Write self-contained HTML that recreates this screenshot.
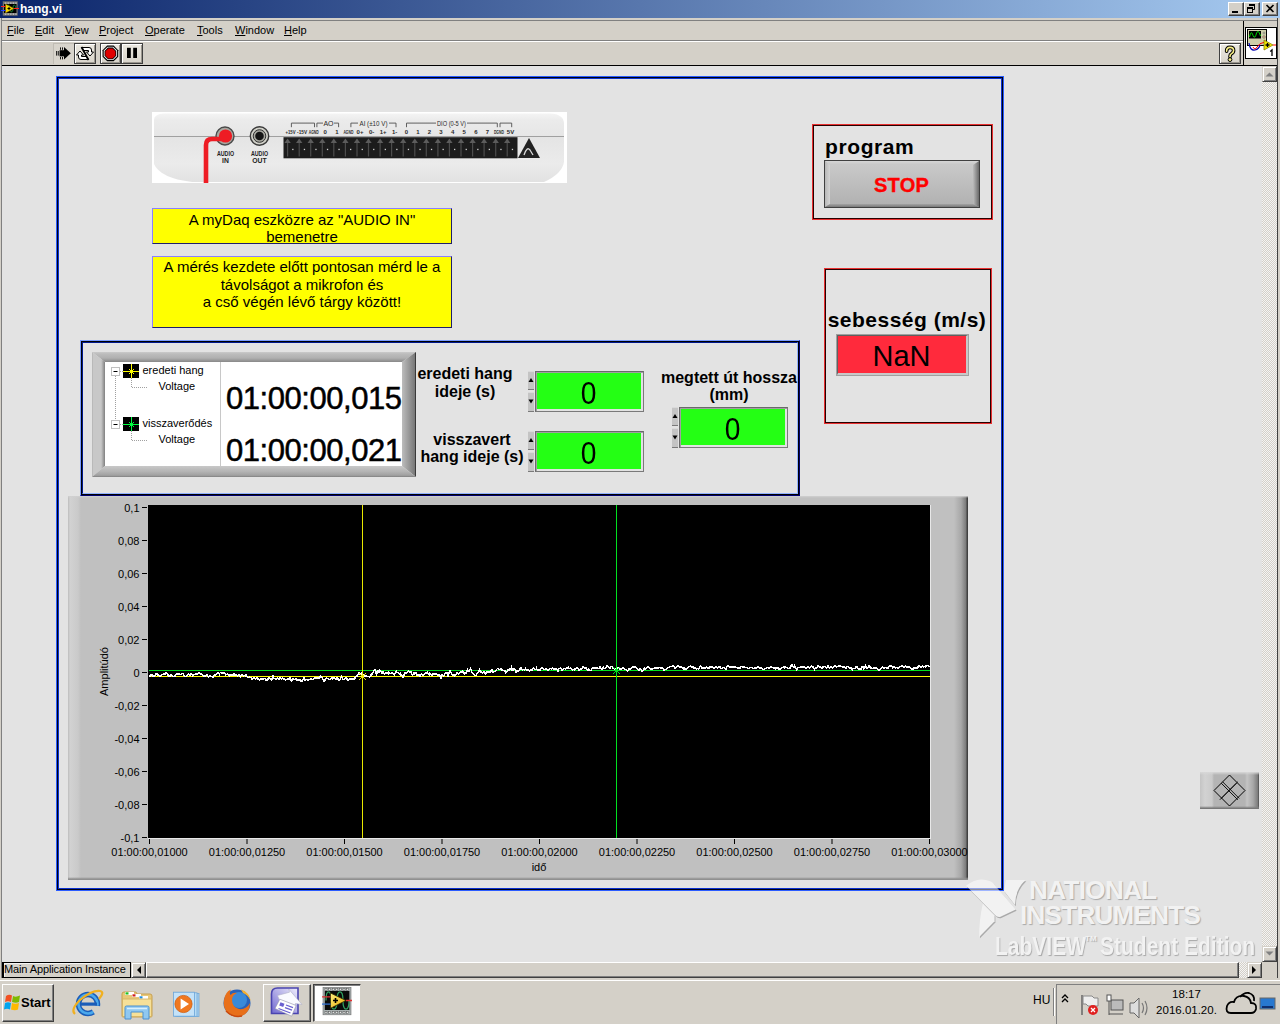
<!DOCTYPE html>
<html><head><meta charset="utf-8"><style>
html,body{margin:0;padding:0;}
body{width:1280px;height:1024px;overflow:hidden;position:relative;background:#e3e3e3;font-family:"Liberation Sans",sans-serif;}
.t{position:absolute;white-space:pre;}
.b{position:absolute;box-sizing:border-box;}
svg{position:absolute;}
</style></head><body>
<div class="b" style="left:0px;top:0px;width:1280px;height:18px;background:linear-gradient(to right,#0a246a,#a6caf0);"></div>
<svg style="left:1px;top:1px" width="18" height="15" viewBox="0 0 18 15">
<rect x="2" y="0.5" width="14.5" height="14" fill="#808080" stroke="#606060" stroke-width="0.6"/>
<rect x="3" y="3" width="12.5" height="9" fill="#000"/>
<rect x="4.0" y="1.6" width="1.2" height="1" fill="#ddd"/><rect x="4.0" y="12.6" width="1.2" height="1" fill="#ddd"/><rect x="6.6" y="1.6" width="1.2" height="1" fill="#ddd"/><rect x="6.6" y="12.6" width="1.2" height="1" fill="#ddd"/><rect x="9.2" y="1.6" width="1.2" height="1" fill="#ddd"/><rect x="9.2" y="12.6" width="1.2" height="1" fill="#ddd"/><rect x="11.8" y="1.6" width="1.2" height="1" fill="#ddd"/><rect x="11.8" y="12.6" width="1.2" height="1" fill="#ddd"/><rect x="14.4" y="1.6" width="1.2" height="1" fill="#ddd"/><rect x="14.4" y="12.6" width="1.2" height="1" fill="#ddd"/>
<path d="M6 8 C6 3, 9 3, 9 7.5 S 12 12, 12 7.5 S 14 3, 15 7" stroke="#20a040" stroke-width="0.8" fill="none"/>
<path d="M4.5 3 L13 7.5 L4.5 12 Z" fill="#f5d800" stroke="#806000" stroke-width="0.5"/>
<path d="M6.5 7.5h3M8 6v3" stroke="#000" stroke-width="1"/>
<path d="M0 5.5h4.5M13 7.5h5" stroke="#ff2020" stroke-width="1"/>
<path d="M0 9.5h4.5" stroke="#2040ff" stroke-width="1"/>
</svg>
<div class="t" style="left:20px;top:2.84px;font-size:12px;line-height:12px;color:#fff;font-weight:bold;">hang.vi</div>
<div class="b" style="left:1228px;top:2px;width:16px;height:14px;background:#d4d0c8;border-top:1px solid #fff;border-left:1px solid #fff;border-right:1px solid #404040;border-bottom:1px solid #404040;box-shadow:inset -1px -1px 0 #808080;"></div>
<div class="b" style="left:1244px;top:2px;width:16px;height:14px;background:#d4d0c8;border-top:1px solid #fff;border-left:1px solid #fff;border-right:1px solid #404040;border-bottom:1px solid #404040;box-shadow:inset -1px -1px 0 #808080;"></div>
<div class="b" style="left:1262px;top:2px;width:16px;height:14px;background:#d4d0c8;border-top:1px solid #fff;border-left:1px solid #fff;border-right:1px solid #404040;border-bottom:1px solid #404040;box-shadow:inset -1px -1px 0 #808080;"></div>
<svg style="left:1228px;top:2px" width="50" height="14" viewBox="0 0 50 14">
<rect x="4" y="9" width="6" height="2" fill="#000"/>
<path d="M21.5 2.5 H26.5 V7.5 H25" fill="none" stroke="#000" stroke-width="1"/><rect x="21" y="2" width="6" height="2" fill="#000"/>
<rect x="19.5" y="5.5" width="5" height="5" fill="#d4d0c8" stroke="#000" stroke-width="1"/><rect x="19" y="5" width="6" height="2" fill="#000"/>
<path d="M38.5 3 L45.5 10 M45.5 3 L38.5 10" stroke="#000" stroke-width="1.6"/>
</svg>
<div class="b" style="left:0px;top:18px;width:1280px;height:3px;background:#d4d0c8;border-bottom:1px solid #808080;"></div>
<div class="b" style="left:0px;top:18px;width:2px;height:961px;background:#d4d0c8;border-left:1px solid #d4d0c8;box-shadow:inset -1px 0 0 #808080;"></div>
<div class="b" style="left:1277px;top:18px;width:3px;height:961px;background:#d4d0c8;box-shadow:inset 1px 0 0 #404040;"></div>
<div class="b" style="left:2px;top:21px;width:1275px;height:19px;background:#d4d0c8;"></div>
<div class="t" style="left:7px;top:24.69px;font-size:11px;line-height:11px;color:#000;"><u style="text-decoration-thickness:1px;text-underline-offset:1px">F</u>ile</div>
<div class="t" style="left:35px;top:24.69px;font-size:11px;line-height:11px;color:#000;"><u style="text-decoration-thickness:1px;text-underline-offset:1px">E</u>dit</div>
<div class="t" style="left:65px;top:24.69px;font-size:11px;line-height:11px;color:#000;"><u style="text-decoration-thickness:1px;text-underline-offset:1px">V</u>iew</div>
<div class="t" style="left:99px;top:24.69px;font-size:11px;line-height:11px;color:#000;"><u style="text-decoration-thickness:1px;text-underline-offset:1px">P</u>roject</div>
<div class="t" style="left:145px;top:24.69px;font-size:11px;line-height:11px;color:#000;"><u style="text-decoration-thickness:1px;text-underline-offset:1px">O</u>perate</div>
<div class="t" style="left:197px;top:24.69px;font-size:11px;line-height:11px;color:#000;"><u style="text-decoration-thickness:1px;text-underline-offset:1px">T</u>ools</div>
<div class="t" style="left:235px;top:24.69px;font-size:11px;line-height:11px;color:#000;"><u style="text-decoration-thickness:1px;text-underline-offset:1px">W</u>indow</div>
<div class="t" style="left:284px;top:24.69px;font-size:11px;line-height:11px;color:#000;"><u style="text-decoration-thickness:1px;text-underline-offset:1px">H</u>elp</div>
<div class="b" style="left:2px;top:40px;width:1241px;height:2px;background:#808080;border-bottom:1px solid #fff;"></div>
<div class="b" style="left:2px;top:42px;width:1241px;height:23px;background:#d4d0c8;"></div>
<div class="b" style="left:2px;top:65px;width:1275px;height:1px;background:#000;"></div>
<div class="b" style="left:1243px;top:21px;width:1px;height:45px;background:#000;"></div>
<div class="b" style="left:1244px;top:21px;width:33px;height:44px;background:#d4d0c8;"></div>
<div class="b" style="left:53px;top:43px;width:21px;height:21px;background:#d8d4cc;box-shadow:inset 1px 1px 0 #c0bcb4;"></div>
<div class="b" style="left:74px;top:43px;width:22px;height:21px;background:linear-gradient(#ece9e1,#d8d4cb);border:1px solid #404040;box-shadow:inset 1px 1px 0 #fff,inset -1px -1px 0 #9a968e;"></div>
<div class="b" style="left:100px;top:43px;width:21px;height:21px;background:linear-gradient(#ece9e1,#d8d4cb);border:1px solid #404040;box-shadow:inset 1px 1px 0 #fff,inset -1px -1px 0 #9a968e;"></div>
<div class="b" style="left:121px;top:43px;width:22px;height:21px;background:linear-gradient(#ece9e1,#d8d4cb);border:1px solid #404040;box-shadow:inset 1px 1px 0 #fff,inset -1px -1px 0 #9a968e;"></div>
<svg style="left:53px;top:43px" width="90" height="21" viewBox="0 0 90 21">
<path d="M11 4L17.8 10.3L11 16.6Z" fill="#000"/>
<rect x="6.6" y="7.2" width="4.6" height="6.2" fill="#000"/>
<rect x="3.2" y="8" width="0.9" height="4.6" fill="#000"/><rect x="4.8" y="8" width="0.9" height="4.6" fill="#000"/>
<rect x="7" y="4.4" width="0.9" height="2.4" fill="#000"/><rect x="9" y="4.4" width="0.9" height="2.4" fill="#000"/>
<rect x="7" y="14" width="0.9" height="2.4" fill="#000"/><rect x="9" y="14" width="0.9" height="2.4" fill="#000"/>
<g transform="translate(21,0)">
<path d="M7.5 4.5H15Q17.5 4.5 17.5 7V9H19.5L16 13L12.5 9H14.5V7.5H9.5Z" fill="#fff" stroke="#000" stroke-width="1"/>
<path d="M14.5 16.5H7Q4.5 16.5 4.5 14V12H2.5L6 8L9.5 12H7.5V13.5H12.5Z" fill="#fff" stroke="#000" stroke-width="1"/>
<path d="M7.5 4L14.5 17" stroke="#000" stroke-width="1.8"/>
</g>
<g transform="translate(47,0)">
<path d="M7.17 2.60 L13.63 2.60 L18.20 7.17 L18.20 13.63 L13.63 18.20 L7.17 18.20 L2.60 13.63 L2.60 7.17Z" fill="#000"/>
<path d="M7.62 3.70 L13.18 3.70 L17.10 7.62 L17.10 13.18 L13.18 17.10 L7.62 17.10 L3.70 13.18 L3.70 7.62Z" fill="#f4f4f4"/>
<path d="M8.00 4.60 L12.80 4.60 L16.20 8.00 L16.20 12.80 L12.80 16.20 L8.00 16.20 L4.60 12.80 L4.60 8.00Z" fill="#000"/>
<path d="M8.33 5.40 L12.47 5.40 L15.40 8.33 L15.40 12.47 L12.47 15.40 L8.33 15.40 L5.40 12.47 L5.40 8.33Z" fill="#e00000"/>
</g>
<g transform="translate(68,0)">
<rect x="6" y="4.8" width="3.8" height="10.2" fill="#000"/><rect x="12.2" y="4.8" width="3.8" height="10.2" fill="#000"/>
</g>
</svg>
<div class="b" style="left:1219px;top:43px;width:22px;height:21px;background:linear-gradient(#ece9e1,#d8d4cb);border:1px solid #404040;box-shadow:inset 1px 1px 0 #fff,inset -1px -1px 0 #9a968e;"></div>
<svg style="left:1219px;top:43px" width="22" height="21" viewBox="0 0 22 21">
<path d="M7.6 8.2 Q7.6 4.4 11 4.4 Q14.6 4.4 14.6 7.6 Q14.6 9.6 12.6 10.6 Q11 11.4 11 13.2 V13.8" fill="none" stroke="#000" stroke-width="3.6" stroke-linecap="round"/>
<path d="M7.6 8.2 Q7.6 4.4 11 4.4 Q14.6 4.4 14.6 7.6 Q14.6 9.6 12.6 10.6 Q11 11.4 11 13.2 V13.8" fill="none" stroke="#f8f088" stroke-width="1.6" stroke-linecap="round"/>
<circle cx="11" cy="16.6" r="1.9" fill="#f8f088" stroke="#000" stroke-width="1"/>
</svg>
<div class="b" style="left:1245px;top:27px;width:32px;height:32px;background:#fff;border:1px solid #000;"></div>
<svg style="left:1245px;top:27px" width="32" height="32" viewBox="0 0 32 32">
<rect x="2.5" y="2.5" width="19" height="16" fill="#cfcfaa" stroke="#000" stroke-width="1"/>
<rect x="4" y="4" width="12" height="7.5" fill="#000"/>
<path d="M4.5 10 Q6.2 2 8 8.5 Q9.8 13 11.6 6 Q13.2 1.5 15.5 9" stroke="#00d000" stroke-width="1" fill="none"/>
<circle cx="19" cy="6" r="1" fill="none" stroke="#777" stroke-width="0.7"/><circle cx="19" cy="10" r="1.3" fill="#e8b080" stroke="#777" stroke-width="0.7"/>
<path d="M4 16 Q5 24 10 23 Q14 22 15 18" stroke="#0000b0" stroke-width="1.2" fill="none"/>
<path d="M8 20 Q10 24 12 20 Q14 16 20 15 H21" stroke="#ff0000" stroke-width="1" fill="none"/>
<path d="M19 13 L28 18 L19 23 Z" fill="#f0e800" stroke="#8a8000" stroke-width="0.8"/>
<path d="M20.5 18 H24.5 M22.5 16 V20" stroke="#000" stroke-width="1.3"/>
<path d="M28 18 H31" stroke="#ff0000" stroke-width="1"/>
<path d="M25.2 24.5 L27 23 V29" stroke="#000" stroke-width="1.3" fill="none"/>
</svg>
<div class="b" style="left:2px;top:66px;width:1260px;height:896px;background:#e3e3e3;"></div>
<div class="b" style="left:1262px;top:66px;width:15px;height:896px;background-color:#f4f4f4;background-image:linear-gradient(45deg,#d4d0c8 25%,transparent 25%,transparent 75%,#d4d0c8 75%),linear-gradient(45deg,#d4d0c8 25%,transparent 25%,transparent 75%,#d4d0c8 75%);background-size:2px 2px;background-position:0 0,1px 1px;"></div>
<div class="b" style="left:1262px;top:66px;width:15px;height:16px;background:#d4d0c8;border-top:1px solid #d4d0c8;border-left:1px solid #d4d0c8;border-right:1px solid #404040;border-bottom:1px solid #404040;box-shadow:inset 1px 1px 0 #fff,inset -1px -1px 0 #808080;"></div>
<div class="b" style="left:1262px;top:946px;width:15px;height:16px;background:#d4d0c8;border-top:1px solid #d4d0c8;border-left:1px solid #d4d0c8;border-right:1px solid #404040;border-bottom:1px solid #404040;box-shadow:inset 1px 1px 0 #fff,inset -1px -1px 0 #808080;"></div>
<svg style="left:1262px;top:66px" width="15" height="896" viewBox="0 0 15 896">
<path d="M3.5 10.5h8l-4-4z" fill="#808080"/>
<path d="M3.5 885.5h8l-4 4z" fill="#808080"/>
</svg>
<div class="b" style="left:2px;top:962px;width:1260px;height:16px;background:#d4d0c8;border-top:1px solid #fff;"></div>
<div class="b" style="left:2px;top:962px;width:129px;height:16px;background:#d4d0c8;border:1px solid #000;border-left-width:2px;box-shadow:inset 1px 1px 0 #f4f4f4;"></div>
<div class="t" style="left:4px;top:963.69px;font-size:11px;line-height:11px;color:#000;letter-spacing:-0.12px;">Main Application Instance</div>
<div class="b" style="left:131px;top:962px;width:15px;height:16px;background:#d4d0c8;border-top:1px solid #d4d0c8;border-left:1px solid #d4d0c8;border-right:1px solid #404040;border-bottom:1px solid #404040;box-shadow:inset 1px 1px 0 #fff,inset -1px -1px 0 #808080;"></div>
<div class="b" style="left:146px;top:962px;width:1101px;height:16px;background-color:#f4f4f4;background-image:linear-gradient(45deg,#d4d0c8 25%,transparent 25%,transparent 75%,#d4d0c8 75%),linear-gradient(45deg,#d4d0c8 25%,transparent 25%,transparent 75%,#d4d0c8 75%);background-size:2px 2px;background-position:0 0,1px 1px;"></div>
<div class="b" style="left:146px;top:962px;width:1093px;height:16px;background:#d4d0c8;border-top:1px solid #fff;border-left:1px solid #fff;border-right:1px solid #404040;border-bottom:1px solid #404040;box-shadow:inset -1px -1px 0 #808080;"></div>
<div class="b" style="left:1247px;top:962px;width:15px;height:16px;background:#d4d0c8;border-top:1px solid #d4d0c8;border-left:1px solid #d4d0c8;border-right:1px solid #404040;border-bottom:1px solid #404040;box-shadow:inset 1px 1px 0 #fff,inset -1px -1px 0 #808080;"></div>
<div class="b" style="left:1262px;top:962px;width:15px;height:16px;background:#d4d0c8;"></div>
<svg style="left:131px;top:962px" width="1131" height="16" viewBox="0 0 1131 16">
<path d="M10 4v8l-4-4z" fill="#000"/>
<path d="M1121 4v8l4-4z" fill="#000"/>
</svg>
<div class="b" style="left:0px;top:978px;width:1280px;height:2px;background:#d4d0c8;"></div>
<div class="b" style="left:56px;top:76px;width:948px;height:815px;border:1px solid #2a5cff;box-shadow:inset 0 0 0 1px #000010,inset 0 0 0 2px #0a30d0;"></div>
<svg style="left:152px;top:112px" width="415" height="71" viewBox="0 0 415 71">
<defs>
<linearGradient id="dtop" x1="0" y1="0" x2="0" y2="1"><stop offset="0" stop-color="#f4f4f4"/><stop offset="0.3" stop-color="#ebebeb"/><stop offset="1" stop-color="#e6e6e6"/></linearGradient>
<linearGradient id="dbot" x1="0" y1="0" x2="0" y2="1"><stop offset="0" stop-color="#e4e4e4"/><stop offset="0.6" stop-color="#ebebeb"/><stop offset="1" stop-color="#e2e2e2"/></linearGradient>
</defs>
<rect width="415" height="71" fill="#fff"/>
<path d="M2 24 V8 Q2 2 12 1.5 H398 Q412 2 412 12 V24 Z" fill="url(#dtop)"/>
<path d="M2 24 H412 V50 Q410 62 392 70 H40 Q8 66 2 52 Z" fill="url(#dbot)"/>
<path d="M2 24.5 H412" stroke="#a0a0a0" stroke-width="1"/>
<circle cx="73" cy="24" r="9" fill="#a8a8a0" stroke="#4a4a4a" stroke-width="1.4"/>
<circle cx="73.5" cy="24" r="6.6" fill="#ee1c24"/>
<path d="M54 71 V33 Q54 27 60 27 H70" stroke="#ee1c24" stroke-width="4.6" fill="none"/>
<circle cx="107.5" cy="24" r="9.2" fill="#d0d0c8" stroke="#3a3a3a" stroke-width="1.4"/>
<circle cx="107.5" cy="24" r="6.3" fill="#a8a8a0" stroke="#333" stroke-width="1"/>
<circle cx="107.5" cy="24" r="4.3" fill="#151515"/>
<g font-family="Liberation Sans" font-weight="bold" font-size="6.8" fill="#222" text-anchor="middle">
<text x="73.5" y="43.5" textLength="17" lengthAdjust="spacingAndGlyphs">AUDIO</text><text x="73.5" y="50.5">IN</text>
<text x="107.5" y="43.5" textLength="17" lengthAdjust="spacingAndGlyphs">AUDIO</text><text x="107.5" y="50.5">OUT</text>
</g>
<rect x="131.5" y="25.2" width="234" height="21.1" fill="#1c1c1c"/>
<path d="M132.4 31 L135.6 26.6 L138.8 31 Z" fill="#5c5c5c"/><rect x="135.0" y="31" width="1.2" height="13.5" fill="#4c4c4c"/><rect x="140.2" y="36.8" width="1.3" height="1.3" fill="#d0d0d0"/><path d="M144.0 31 L147.2 26.6 L150.4 31 Z" fill="#5c5c5c"/><rect x="146.6" y="31" width="1.2" height="13.5" fill="#4c4c4c"/><rect x="151.8" y="36.8" width="1.3" height="1.3" fill="#d0d0d0"/><path d="M155.5 31 L158.7 26.6 L161.9 31 Z" fill="#5c5c5c"/><rect x="158.1" y="31" width="1.2" height="13.5" fill="#4c4c4c"/><rect x="163.3" y="36.8" width="1.3" height="1.3" fill="#d0d0d0"/><path d="M167.1 31 L170.3 26.6 L173.5 31 Z" fill="#5c5c5c"/><rect x="169.7" y="31" width="1.2" height="13.5" fill="#4c4c4c"/><rect x="174.9" y="36.8" width="1.3" height="1.3" fill="#d0d0d0"/><path d="M178.6 31 L181.8 26.6 L185.0 31 Z" fill="#5c5c5c"/><rect x="181.2" y="31" width="1.2" height="13.5" fill="#4c4c4c"/><rect x="186.4" y="36.8" width="1.3" height="1.3" fill="#d0d0d0"/><path d="M190.2 31 L193.4 26.6 L196.6 31 Z" fill="#5c5c5c"/><rect x="192.8" y="31" width="1.2" height="13.5" fill="#4c4c4c"/><rect x="198.0" y="36.8" width="1.3" height="1.3" fill="#d0d0d0"/><path d="M201.8 31 L205.0 26.6 L208.2 31 Z" fill="#5c5c5c"/><rect x="204.4" y="31" width="1.2" height="13.5" fill="#4c4c4c"/><rect x="209.6" y="36.8" width="1.3" height="1.3" fill="#d0d0d0"/><path d="M213.3 31 L216.5 26.6 L219.7 31 Z" fill="#5c5c5c"/><rect x="215.9" y="31" width="1.2" height="13.5" fill="#4c4c4c"/><rect x="221.1" y="36.8" width="1.3" height="1.3" fill="#d0d0d0"/><path d="M224.9 31 L228.1 26.6 L231.3 31 Z" fill="#5c5c5c"/><rect x="227.5" y="31" width="1.2" height="13.5" fill="#4c4c4c"/><rect x="232.7" y="36.8" width="1.3" height="1.3" fill="#d0d0d0"/><path d="M236.4 31 L239.6 26.6 L242.8 31 Z" fill="#5c5c5c"/><rect x="239.0" y="31" width="1.2" height="13.5" fill="#4c4c4c"/><rect x="244.2" y="36.8" width="1.3" height="1.3" fill="#d0d0d0"/><path d="M248.0 31 L251.2 26.6 L254.4 31 Z" fill="#5c5c5c"/><rect x="250.6" y="31" width="1.2" height="13.5" fill="#4c4c4c"/><rect x="255.8" y="36.8" width="1.3" height="1.3" fill="#d0d0d0"/><path d="M259.6 31 L262.8 26.6 L266.0 31 Z" fill="#5c5c5c"/><rect x="262.2" y="31" width="1.2" height="13.5" fill="#4c4c4c"/><rect x="267.4" y="36.8" width="1.3" height="1.3" fill="#d0d0d0"/><path d="M271.1 31 L274.3 26.6 L277.5 31 Z" fill="#5c5c5c"/><rect x="273.7" y="31" width="1.2" height="13.5" fill="#4c4c4c"/><rect x="278.9" y="36.8" width="1.3" height="1.3" fill="#d0d0d0"/><path d="M282.7 31 L285.9 26.6 L289.1 31 Z" fill="#5c5c5c"/><rect x="285.3" y="31" width="1.2" height="13.5" fill="#4c4c4c"/><rect x="290.5" y="36.8" width="1.3" height="1.3" fill="#d0d0d0"/><path d="M294.2 31 L297.4 26.6 L300.6 31 Z" fill="#5c5c5c"/><rect x="296.8" y="31" width="1.2" height="13.5" fill="#4c4c4c"/><rect x="302.0" y="36.8" width="1.3" height="1.3" fill="#d0d0d0"/><path d="M305.8 31 L309.0 26.6 L312.2 31 Z" fill="#5c5c5c"/><rect x="308.4" y="31" width="1.2" height="13.5" fill="#4c4c4c"/><rect x="313.6" y="36.8" width="1.3" height="1.3" fill="#d0d0d0"/><path d="M317.4 31 L320.6 26.6 L323.8 31 Z" fill="#5c5c5c"/><rect x="320.0" y="31" width="1.2" height="13.5" fill="#4c4c4c"/><rect x="325.2" y="36.8" width="1.3" height="1.3" fill="#d0d0d0"/><path d="M328.9 31 L332.1 26.6 L335.3 31 Z" fill="#5c5c5c"/><rect x="331.5" y="31" width="1.2" height="13.5" fill="#4c4c4c"/><rect x="336.7" y="36.8" width="1.3" height="1.3" fill="#d0d0d0"/><path d="M340.5 31 L343.7 26.6 L346.9 31 Z" fill="#5c5c5c"/><rect x="343.1" y="31" width="1.2" height="13.5" fill="#4c4c4c"/><rect x="348.3" y="36.8" width="1.3" height="1.3" fill="#d0d0d0"/><path d="M352.0 31 L355.2 26.6 L358.4 31 Z" fill="#5c5c5c"/><rect x="354.6" y="31" width="1.2" height="13.5" fill="#4c4c4c"/><rect x="359.8" y="36.8" width="1.3" height="1.3" fill="#d0d0d0"/>
<g font-family="Liberation Sans" font-weight="bold" font-size="6" fill="#2a2a2a" text-anchor="middle"><text x="138.5" y="22.3" textLength="10" lengthAdjust="spacingAndGlyphs">+15V</text><text x="150.1" y="22.3" textLength="10" lengthAdjust="spacingAndGlyphs">-15V</text><text x="161.7" y="22.3" textLength="10" lengthAdjust="spacingAndGlyphs">AGND</text><text x="173.2" y="22.3">0</text><text x="184.8" y="22.3">1</text><text x="196.4" y="22.3" textLength="10" lengthAdjust="spacingAndGlyphs">AGND</text><text x="208.0" y="22.3">0+</text><text x="219.6" y="22.3">0-</text><text x="231.1" y="22.3">1+</text><text x="242.7" y="22.3">1-</text><text x="254.3" y="22.3">0</text><text x="265.9" y="22.3">1</text><text x="277.5" y="22.3">2</text><text x="289.0" y="22.3">3</text><text x="300.6" y="22.3">4</text><text x="312.2" y="22.3">5</text><text x="323.8" y="22.3">6</text><text x="335.4" y="22.3">7</text><text x="346.9" y="22.3" textLength="10" lengthAdjust="spacingAndGlyphs">DGND</text><text x="358.5" y="22.3">5V</text></g>
<path d="M139.4 15.2 V11.1 H162.5 V15.2 M164.9 15.2 V11.1 H186.6 V15.2 M198.9 15.2 V11.1 H244 V15.2 M254.5 15.2 V11.1 H345.3 V15.2 M348 15.2 V11.1 H359.7 V15.2" stroke="#505050" stroke-width="0.9" fill="none"/>
<rect x="171" y="8" width="11" height="6" fill="#e9e9e9"/><rect x="206" y="8" width="31" height="6" fill="#e9e9e9"/><rect x="284" y="8" width="31" height="6" fill="#e9e9e9"/>
<g font-family="Liberation Sans" font-size="7" fill="#2a2a2a" text-anchor="middle"><text x="176.5" y="14">AO</text><text x="221.5" y="14" textLength="28" lengthAdjust="spacingAndGlyphs">AI (±10 V)</text><text x="299.5" y="14" textLength="29" lengthAdjust="spacingAndGlyphs">DIO (0-5 V)</text></g>
<path d="M366 46 L377 26 L388 46 Z" fill="#222"/>
<path d="M372 43 q3-9 6-5 l3 5" stroke="#ddd" stroke-width="1.3" fill="none"/>
</svg>
<div class="b" style="left:152px;top:208px;width:300px;height:36px;background:#ffff00;border-top:1px solid #8a80ff;border-left:1px solid #8a80ff;border-right:1px solid #20206a;border-bottom:1px solid #20206a;"></div>
<div class="t" style="left:302px;top:212.30px;font-size:15px;line-height:15px;color:#000;width:300px;text-align:center;margin-left:-150.0px;">A myDaq eszközre az "AUDIO IN"</div>
<div class="t" style="left:302px;top:229.30px;font-size:15px;line-height:15px;color:#000;width:300px;text-align:center;margin-left:-150.0px;">bemenetre</div>
<div class="b" style="left:152px;top:256px;width:300px;height:72px;background:#ffff00;border-top:1px solid #8a80ff;border-left:1px solid #8a80ff;border-right:1px solid #20206a;border-bottom:1px solid #20206a;"></div>
<div class="t" style="left:302px;top:259.30px;font-size:15px;line-height:15px;color:#000;width:300px;text-align:center;margin-left:-150.0px;">A mérés kezdete előtt pontosan mérd le a</div>
<div class="t" style="left:302px;top:277.30px;font-size:15px;line-height:15px;color:#000;width:300px;text-align:center;margin-left:-150.0px;">távolságot a mikrofon és</div>
<div class="t" style="left:302px;top:294.30px;font-size:15px;line-height:15px;color:#000;width:300px;text-align:center;margin-left:-150.0px;">a cső végén lévő tárgy között!</div>
<div class="b" style="left:812px;top:124px;width:181px;height:96px;border:1px solid #e83030;box-shadow:inset 0 0 0 1px #280000;"></div>
<div class="t" style="left:825px;top:136.22px;font-size:21px;line-height:21px;color:#000;font-weight:bold;letter-spacing:0.6px;">program</div>
<div class="b" style="left:824px;top:160px;width:156px;height:48px;background:#404040;"></div>
<svg style="left:825px;top:161px" width="154" height="46" viewBox="0 0 154 46">
<defs>
<linearGradient id="sbF" x1="0" y1="0" x2="0" y2="1"><stop offset="0" stop-color="#cbcbcb"/><stop offset="1" stop-color="#b0b0b0"/></linearGradient>
<linearGradient id="sbT" x1="0" y1="0" x2="0" y2="1"><stop offset="0" stop-color="#d6d6d6"/><stop offset="1" stop-color="#c6c6c6"/></linearGradient>
<linearGradient id="sbL" x1="0" y1="0" x2="1" y2="0"><stop offset="0" stop-color="#b8b8b8"/><stop offset="1" stop-color="#d4d4d4"/></linearGradient>
<linearGradient id="sbR" x1="0" y1="0" x2="1" y2="0"><stop offset="0" stop-color="#bcbcbc"/><stop offset="1" stop-color="#6a6a6a"/></linearGradient>
<linearGradient id="sbB" x1="0" y1="0" x2="0" y2="1"><stop offset="0" stop-color="#a4a4a4"/><stop offset="1" stop-color="#787878"/></linearGradient>
</defs>
<rect x="0" y="0" width="154" height="46" fill="url(#sbF)"/>
<path d="M0 0H154L149 4H5Z" fill="url(#sbT)"/>
<path d="M0 0L5 4V43L0 46Z" fill="url(#sbL)"/>
<path d="M154 0V46L148 43V4Z" fill="url(#sbR)"/>
<path d="M0 46H154L148 43H5Z" fill="url(#sbB)"/>
</svg>
<div class="t" style="left:901.5px;top:175.07px;font-size:20px;line-height:20px;color:#ff0000;font-weight:bold;letter-spacing:0.2px;width:150px;text-align:center;margin-left:-75.0px;-webkit-text-stroke:0.35px #ff0000;">STOP</div>
<div class="b" style="left:824px;top:268px;width:168px;height:156px;border:1px solid #e83030;box-shadow:inset 0 0 0 1px #280000;"></div>
<div class="t" style="left:907px;top:309.22px;font-size:21px;line-height:21px;color:#000;font-weight:bold;letter-spacing:0.5px;width:180px;text-align:center;margin-left:-90.0px;">sebesség (m/s)</div>
<div class="b" style="left:837px;top:335px;width:131px;height:40px;background:#ff2a3c;border-top:1px solid #606060;border-left:1px solid #606060;border-right:2px solid #c8c8c8;border-bottom:2px solid #c8c8c8;box-shadow:0 0 0 1px #a0a0a0;"></div>
<div class="t" style="left:901.5px;top:342.45px;font-size:29px;line-height:29px;color:#000;width:130px;text-align:center;margin-left:-65.0px;">NaN</div>
<div class="b" style="left:80px;top:340px;width:720px;height:156px;border-top:1px solid #7a9cff;border-left:1px solid #7a9cff;border-right:1px solid #000070;border-bottom:1px solid #000070;"></div>
<div class="b" style="left:81px;top:341px;width:718px;height:154px;border:1px solid #000;"></div>
<div class="b" style="left:82px;top:342px;width:716px;height:152px;border-top:1px solid #001890;border-left:1px solid #001890;border-right:1px solid #90b0ff;border-bottom:1px solid #90b0ff;"></div>
<svg style="left:92px;top:352px" width="324" height="125" viewBox="0 0 324 125">
<defs>
<linearGradient id="lgT" x1="0" y1="0" x2="0" y2="1"><stop offset="0" stop-color="#cacaca"/><stop offset="0.2" stop-color="#bcbcbc"/><stop offset="0.6" stop-color="#b0b0b0"/><stop offset="1" stop-color="#888"/></linearGradient>
<linearGradient id="lgL" x1="0" y1="0" x2="1" y2="0"><stop offset="0" stop-color="#b0b0b0"/><stop offset="0.1" stop-color="#c8c8c8"/><stop offset="0.7" stop-color="#c8c8c8"/><stop offset="1" stop-color="#808080"/></linearGradient>
<linearGradient id="lgR" x1="0" y1="0" x2="1" y2="0"><stop offset="0" stop-color="#bdbdbd"/><stop offset="0.9" stop-color="#7a7a7a"/><stop offset="0.93" stop-color="#3a3a3a"/><stop offset="1" stop-color="#3a3a3a"/></linearGradient>
<linearGradient id="lgB" x1="0" y1="0" x2="0" y2="1"><stop offset="0" stop-color="#c8c8c8"/><stop offset="0.5" stop-color="#b4b4b4"/><stop offset="0.85" stop-color="#a0a0a0"/><stop offset="1" stop-color="#808080"/></linearGradient>
</defs>
<path d="M0 0H324L310 10H13Z" fill="url(#lgT)"/>
<path d="M0 0L13 10V114L0 125Z" fill="url(#lgL)"/>
<path d="M324 0V125L310 114V10Z" fill="url(#lgR)"/>
<path d="M0 125H324L310 114H13Z" fill="url(#lgB)"/>
</svg>
<div class="b" style="left:105px;top:362px;width:297px;height:104px;background:#fff;"></div>
<div class="b" style="left:220px;top:362px;width:1px;height:104px;background:#c8c8c8;"></div>
<div class="t" style="left:226px;top:382.76px;font-size:31px;line-height:31px;color:#000;letter-spacing:-0.45px;-webkit-text-stroke:0.5px #000;">01:00:00,015</div>
<div class="t" style="left:226px;top:434.76px;font-size:31px;line-height:31px;color:#000;letter-spacing:-0.45px;-webkit-text-stroke:0.5px #000;">01:00:00,021</div>
<svg style="left:105px;top:362px" width="115" height="104" viewBox="0 0 115 104">
<g stroke="#a0a0a0" stroke-width="1" stroke-dasharray="1 1" fill="none">
<path d="M10.5 14 V58"/><path d="M26.5 16 V25.5 H43"/><path d="M26.5 69 V78.5 H43"/>
<path d="M15 9.5 H18"/><path d="M15 62.5 H18"/>
</g>
<rect x="6.5" y="5.5" width="8" height="8" fill="#fff" stroke="#c0c0c0"/>
<path d="M8.5 9.5h4" stroke="#000"/>
<rect x="6.5" y="58.5" width="8" height="8" fill="#fff" stroke="#c0c0c0"/>
<path d="M8.5 62.5h4" stroke="#000"/>
<rect x="18" y="2" width="16" height="14" fill="#000"/>
<path d="M18 9.5h16M26.5 2v14M24 7l5 5M29 7l-5 5" stroke="#ffff00" stroke-width="1"/>
<rect x="18" y="55" width="16" height="14" fill="#000"/>
<path d="M18 62.5h16M26.5 55v14M24 60l5 5M29 60l-5 5" stroke="#00ff40" stroke-width="1"/>
</svg>
<div class="t" style="left:142.5px;top:364.69px;font-size:11px;line-height:11px;color:#000;">eredeti hang</div>
<div class="t" style="left:158.5px;top:380.69px;font-size:11px;line-height:11px;color:#000;">Voltage</div>
<div class="t" style="left:142.5px;top:417.69px;font-size:11px;line-height:11px;color:#000;">visszaverődés</div>
<div class="t" style="left:158.5px;top:433.69px;font-size:11px;line-height:11px;color:#000;">Voltage</div>
<div class="b" style="left:528px;top:371px;width:6px;height:19px;background:#c4c4c4;border-top:1px solid #dadada;border-bottom:1px solid #7a7a7a;"></div>
<div class="b" style="left:528px;top:392px;width:6px;height:20px;background:#c4c4c4;border-top:1px solid #dadada;border-bottom:1px solid #7a7a7a;"></div>
<svg style="left:528px;top:371px" width="7" height="41" viewBox="0 0 7 41"><path d="M0.5 11 H5.5 L3 7 Z" fill="#000"/><path d="M0.5 28.5 H5.5 L3 32.5 Z" fill="#000"/></svg>
<div class="b" style="left:535px;top:371px;width:109px;height:41px;background:#24ff14;border-top:1px solid #6a6a6a;border-left:1px solid #6a6a6a;border-right:1px solid #7a7a7a;border-bottom:1px solid #7a7a7a;box-shadow:inset 1px 1px 0 #a0a0a0,inset -2px -2px 0 #e2e2e2;"></div>
<div class="t" style="left:588px;top:376.91px;font-size:32px;line-height:32px;color:#000;width:109px;text-align:center;margin-left:-54.5px;transform:scaleX(0.88);">0</div>
<div class="b" style="left:528px;top:431px;width:6px;height:19px;background:#c4c4c4;border-top:1px solid #dadada;border-bottom:1px solid #7a7a7a;"></div>
<div class="b" style="left:528px;top:452px;width:6px;height:20px;background:#c4c4c4;border-top:1px solid #dadada;border-bottom:1px solid #7a7a7a;"></div>
<svg style="left:528px;top:431px" width="7" height="41" viewBox="0 0 7 41"><path d="M0.5 11 H5.5 L3 7 Z" fill="#000"/><path d="M0.5 28.5 H5.5 L3 32.5 Z" fill="#000"/></svg>
<div class="b" style="left:535px;top:431px;width:109px;height:41px;background:#24ff14;border-top:1px solid #6a6a6a;border-left:1px solid #6a6a6a;border-right:1px solid #7a7a7a;border-bottom:1px solid #7a7a7a;box-shadow:inset 1px 1px 0 #a0a0a0,inset -2px -2px 0 #e2e2e2;"></div>
<div class="t" style="left:588px;top:436.91px;font-size:32px;line-height:32px;color:#000;width:109px;text-align:center;margin-left:-54.5px;transform:scaleX(0.88);">0</div>
<div class="b" style="left:672px;top:407px;width:6px;height:19px;background:#c4c4c4;border-top:1px solid #dadada;border-bottom:1px solid #7a7a7a;"></div>
<div class="b" style="left:672px;top:428px;width:6px;height:20px;background:#c4c4c4;border-top:1px solid #dadada;border-bottom:1px solid #7a7a7a;"></div>
<svg style="left:672px;top:407px" width="7" height="41" viewBox="0 0 7 41"><path d="M0.5 11 H5.5 L3 7 Z" fill="#000"/><path d="M0.5 28.5 H5.5 L3 32.5 Z" fill="#000"/></svg>
<div class="b" style="left:679px;top:407px;width:109px;height:41px;background:#24ff14;border-top:1px solid #6a6a6a;border-left:1px solid #6a6a6a;border-right:1px solid #7a7a7a;border-bottom:1px solid #7a7a7a;box-shadow:inset 1px 1px 0 #a0a0a0,inset -2px -2px 0 #e2e2e2;"></div>
<div class="t" style="left:732px;top:412.91px;font-size:32px;line-height:32px;color:#000;width:109px;text-align:center;margin-left:-54.5px;transform:scaleX(0.88);">0</div>
<div class="t" style="left:465px;top:366.46px;font-size:16px;line-height:16px;color:#000;font-weight:bold;width:120px;text-align:center;margin-left:-60.0px;">eredeti hang</div>
<div class="t" style="left:465px;top:384.46px;font-size:16px;line-height:16px;color:#000;font-weight:bold;width:120px;text-align:center;margin-left:-60.0px;">ideje (s)</div>
<div class="t" style="left:472px;top:432.46px;font-size:16px;line-height:16px;color:#000;font-weight:bold;width:120px;text-align:center;margin-left:-60.0px;">visszavert</div>
<div class="t" style="left:472px;top:449.46px;font-size:16px;line-height:16px;color:#000;font-weight:bold;width:120px;text-align:center;margin-left:-60.0px;">hang ideje (s)</div>
<div class="t" style="left:729px;top:370.46px;font-size:16px;line-height:16px;color:#000;font-weight:bold;width:150px;text-align:center;margin-left:-75.0px;">megtett út hossza</div>
<div class="t" style="left:729px;top:387.46px;font-size:16px;line-height:16px;color:#000;font-weight:bold;width:150px;text-align:center;margin-left:-75.0px;">(mm)</div>
<div class="b" style="left:68px;top:496px;width:900px;height:384px;background:linear-gradient(to right,#bdbdbd 0px,#d2d2d2 2px,#cacaca 10px,#c0c0c0 13px,#c0c0c0 886px,#a8a8a8 893px,#7a7a7a 898px,#404040 899px);"></div>
<div class="b" style="left:68px;top:496px;width:900px;height:384px;background:linear-gradient(#d0d0d0,transparent 2px,transparent 381px,#909090 383px);"></div>
<div class="b" style="left:148px;top:505px;width:783px;height:334px;background:#000;border-right:1px solid #e8e8e8;border-bottom:1px solid #e8e8e8;"></div>
<div class="t" style="left:139.5px;top:502.69px;font-size:11px;line-height:11px;color:#000;width:60px;text-align:right;margin-left:-60px;">0,1</div>
<div class="t" style="left:139.5px;top:535.69px;font-size:11px;line-height:11px;color:#000;width:60px;text-align:right;margin-left:-60px;">0,08</div>
<div class="t" style="left:139.5px;top:568.69px;font-size:11px;line-height:11px;color:#000;width:60px;text-align:right;margin-left:-60px;">0,06</div>
<div class="t" style="left:139.5px;top:601.69px;font-size:11px;line-height:11px;color:#000;width:60px;text-align:right;margin-left:-60px;">0,04</div>
<div class="t" style="left:139.5px;top:634.69px;font-size:11px;line-height:11px;color:#000;width:60px;text-align:right;margin-left:-60px;">0,02</div>
<div class="t" style="left:139.5px;top:667.69px;font-size:11px;line-height:11px;color:#000;width:60px;text-align:right;margin-left:-60px;">0</div>
<div class="t" style="left:139.5px;top:700.69px;font-size:11px;line-height:11px;color:#000;width:60px;text-align:right;margin-left:-60px;">-0,02</div>
<div class="t" style="left:139.5px;top:733.69px;font-size:11px;line-height:11px;color:#000;width:60px;text-align:right;margin-left:-60px;">-0,04</div>
<div class="t" style="left:139.5px;top:766.69px;font-size:11px;line-height:11px;color:#000;width:60px;text-align:right;margin-left:-60px;">-0,06</div>
<div class="t" style="left:139.5px;top:799.69px;font-size:11px;line-height:11px;color:#000;width:60px;text-align:right;margin-left:-60px;">-0,08</div>
<div class="t" style="left:139.5px;top:832.69px;font-size:11px;line-height:11px;color:#000;width:60px;text-align:right;margin-left:-60px;">-0,1</div>
<div class="t" style="left:149.5px;top:846.69px;font-size:11px;line-height:11px;color:#000;width:100px;text-align:center;margin-left:-50.0px;">01:00:00,01000</div>
<div class="t" style="left:247.0px;top:846.69px;font-size:11px;line-height:11px;color:#000;width:100px;text-align:center;margin-left:-50.0px;">01:00:00,01250</div>
<div class="t" style="left:344.5px;top:846.69px;font-size:11px;line-height:11px;color:#000;width:100px;text-align:center;margin-left:-50.0px;">01:00:00,01500</div>
<div class="t" style="left:442.0px;top:846.69px;font-size:11px;line-height:11px;color:#000;width:100px;text-align:center;margin-left:-50.0px;">01:00:00,01750</div>
<div class="t" style="left:539.5px;top:846.69px;font-size:11px;line-height:11px;color:#000;width:100px;text-align:center;margin-left:-50.0px;">01:00:00,02000</div>
<div class="t" style="left:637.0px;top:846.69px;font-size:11px;line-height:11px;color:#000;width:100px;text-align:center;margin-left:-50.0px;">01:00:00,02250</div>
<div class="t" style="left:734.5px;top:846.69px;font-size:11px;line-height:11px;color:#000;width:100px;text-align:center;margin-left:-50.0px;">01:00:00,02500</div>
<div class="t" style="left:832.0px;top:846.69px;font-size:11px;line-height:11px;color:#000;width:100px;text-align:center;margin-left:-50.0px;">01:00:00,02750</div>
<div class="t" style="left:929.5px;top:846.69px;font-size:11px;line-height:11px;color:#000;width:100px;text-align:center;margin-left:-50.0px;">01:00:00,03000</div>
<div class="t" style="left:539px;top:861.69px;font-size:11px;line-height:11px;color:#000;width:60px;text-align:center;margin-left:-30.0px;">idő</div>
<div class="t" style="left:104px;top:665.69px;font-size:11px;line-height:11px;color:#000;width:80px;text-align:center;margin-left:-40.0px;transform:rotate(-90deg);">Amplitúdó</div>
<svg style="left:0;top:0" width="1280" height="1024" viewBox="0 0 1280 1024"><path d="M142 507.5h5" stroke="#000" stroke-width="1"/><path d="M142 540.5h5" stroke="#000" stroke-width="1"/><path d="M142 573.5h5" stroke="#000" stroke-width="1"/><path d="M142 606.5h5" stroke="#000" stroke-width="1"/><path d="M142 639.5h5" stroke="#000" stroke-width="1"/><path d="M142 672.5h5" stroke="#000" stroke-width="1"/><path d="M142 705.5h5" stroke="#000" stroke-width="1"/><path d="M142 738.5h5" stroke="#000" stroke-width="1"/><path d="M142 771.5h5" stroke="#000" stroke-width="1"/><path d="M142 804.5h5" stroke="#000" stroke-width="1"/><path d="M142 837.5h5" stroke="#000" stroke-width="1"/><path d="M149.5 839v5" stroke="#000" stroke-width="1"/><path d="M247.0 839v5" stroke="#000" stroke-width="1"/><path d="M344.5 839v5" stroke="#000" stroke-width="1"/><path d="M442.0 839v5" stroke="#000" stroke-width="1"/><path d="M539.5 839v5" stroke="#000" stroke-width="1"/><path d="M637.0 839v5" stroke="#000" stroke-width="1"/><path d="M734.5 839v5" stroke="#000" stroke-width="1"/><path d="M832.0 839v5" stroke="#000" stroke-width="1"/><path d="M929.5 839v5" stroke="#000" stroke-width="1"/></svg>
<svg style="left:0;top:0" width="1280" height="1024" viewBox="0 0 1280 1024">
<defs><clipPath id="pl"><rect x="149" y="505" width="781" height="333"/></clipPath></defs>
<g clip-path="url(#pl)">
<path d="M149 670.5H930" stroke="#00e020" stroke-width="1"/>
<path d="M149 676.5H930" stroke="#ffff00" stroke-width="1"/>
<polyline points="149.0,676.0 149.5,676.1 150.0,676.3 150.5,675.2 151.0,675.6 151.5,675.5 152.0,675.0 152.5,675.8 153.0,675.5 153.5,675.7 154.0,676.2 154.5,675.6 155.0,675.5 155.5,675.0 156.0,674.0 156.5,674.0 157.0,674.0 157.5,675.3 158.0,675.2 158.5,675.1 159.0,675.4 159.5,675.6 160.0,676.4 160.5,675.9 161.0,675.6 161.5,675.4 162.0,674.6 162.5,674.6 163.0,674.7 163.5,674.1 164.0,674.4 164.5,673.9 165.0,674.2 165.5,673.5 166.0,672.9 166.5,673.2 167.0,673.4 167.5,673.4 168.0,675.1 168.5,676.6 169.0,676.6 169.5,676.3 170.0,676.6 170.5,675.5 171.0,674.7 171.5,674.4 172.0,675.7 172.5,676.6 173.0,676.3 173.5,676.3 174.0,676.2 174.5,676.1 175.0,676.1 175.5,675.1 176.0,674.8 176.5,674.2 177.0,674.0 177.5,674.0 178.0,674.0 178.5,674.7 179.0,674.6 179.5,674.2 180.0,674.3 180.5,674.7 181.0,674.8 181.5,674.2 182.0,673.6 182.5,673.4 183.0,673.7 183.5,674.5 184.0,675.2 184.5,675.3 185.0,676.2 185.5,676.4 186.0,676.7 186.5,676.2 187.0,675.5 187.5,675.4 188.0,674.5 188.5,674.2 189.0,674.1 189.5,674.6 190.0,675.2 190.5,674.5 191.0,673.9 191.5,674.0 192.0,674.2 192.5,674.7 193.0,675.8 193.5,675.2 194.0,674.6 194.5,674.3 195.0,674.3 195.5,674.0 196.0,673.6 196.5,674.4 197.0,674.3 197.5,674.4 198.0,673.6 198.5,672.9 199.0,672.6 199.5,673.4 200.0,673.9 200.5,674.3 201.0,674.0 201.5,674.4 202.0,674.9 202.5,675.1 203.0,675.8 203.5,675.6 204.0,676.0 204.5,675.7 205.0,676.3 205.5,676.0 206.0,675.6 206.5,675.1 207.0,674.9 207.5,675.4 208.0,676.1 208.5,676.9 209.0,676.6 209.5,676.1 210.0,675.5 210.5,676.0 211.0,676.1 211.5,676.5 212.0,676.5 212.5,677.2 213.0,677.3 213.5,676.2 214.0,675.7 214.5,674.8 215.0,675.2 215.5,675.2 216.0,674.8 216.5,674.6 217.0,673.8 217.5,672.9 218.0,673.4 218.5,673.1 219.0,673.8 219.5,674.6 220.0,673.7 220.5,673.5 221.0,672.6 221.5,672.9 222.0,672.9 222.5,673.1 223.0,673.1 223.5,673.3 224.0,672.5 224.5,673.0 225.0,673.2 225.5,673.6 226.0,674.9 226.5,674.4 227.0,674.1 227.5,674.2 228.0,674.6 228.5,674.8 229.0,674.6 229.5,675.7 230.0,675.4 230.5,675.0 231.0,675.3 231.5,674.7 232.0,675.5 232.5,675.2 233.0,675.0 233.5,673.9 234.0,673.8 234.5,674.2 235.0,675.0 235.5,675.0 236.0,674.7 236.5,675.1 237.0,675.3 237.5,675.8 238.0,675.6 238.5,675.1 239.0,675.0 239.5,676.0 240.0,675.9 240.5,676.7 241.0,675.6 241.5,674.9 242.0,674.2 242.5,674.4 243.0,675.3 243.5,676.0 244.0,675.6 244.5,675.6 245.0,675.3 245.5,675.2 246.0,676.2 246.5,675.5 247.0,676.3 247.5,677.1 248.0,677.4 248.5,677.4 249.0,677.7 249.5,677.2 250.0,677.1 250.5,677.5 251.0,677.5 251.5,678.2 252.0,679.0 252.5,679.2 253.0,678.9 253.5,678.2 254.0,677.8 254.5,677.9 255.0,678.2 255.5,678.8 256.0,678.6 256.5,678.2 257.0,678.4 257.5,678.2 258.0,679.0 258.5,679.3 259.0,679.8 259.5,680.3 260.0,679.9 260.5,679.5 261.0,678.5 261.5,678.7 262.0,678.9 262.5,679.4 263.0,679.5 263.5,679.3 264.0,678.6 264.5,678.4 265.0,678.9 265.5,679.2 266.0,680.1 266.5,680.2 267.0,680.2 267.5,679.7 268.0,679.0 268.5,678.6 269.0,678.0 269.5,678.3 270.0,678.6 270.5,679.4 271.0,679.8 271.5,679.8 272.0,679.1 272.5,679.0 273.0,674.9 273.5,677.9 274.0,678.4 274.5,678.3 275.0,678.9 275.5,678.9 276.0,679.3 276.5,679.3 277.0,678.9 277.5,678.0 278.0,678.2 278.5,678.7 279.0,679.2 279.5,678.7 280.0,677.8 280.5,678.1 281.0,678.5 281.5,678.8 282.0,678.7 282.5,677.8 283.0,678.1 283.5,678.5 284.0,678.9 284.5,679.7 285.0,679.7 285.5,679.8 286.0,679.6 286.5,679.6 287.0,679.4 287.5,678.9 288.0,678.4 288.5,679.1 289.0,678.2 289.5,678.7 290.0,677.9 290.5,678.6 291.0,679.9 291.5,680.9 292.0,680.5 292.5,679.1 293.0,678.8 293.5,678.7 294.0,679.1 294.5,679.6 295.0,679.6 295.5,678.5 296.0,678.6 296.5,679.3 297.0,680.0 297.5,680.5 298.0,680.1 298.5,679.8 299.0,680.0 299.5,679.7 300.0,679.7 300.5,680.5 301.0,681.1 301.5,681.2 302.0,681.1 302.5,680.4 303.0,679.5 303.5,678.7 304.0,677.6 304.5,679.2 305.0,680.5 305.5,680.1 306.0,679.6 306.5,679.4 307.0,679.4 307.5,679.8 308.0,680.1 308.5,679.7 309.0,679.8 309.5,679.7 310.0,679.6 310.5,678.7 311.0,678.4 311.5,678.5 312.0,679.3 312.5,679.3 313.0,679.6 313.5,679.1 314.0,678.9 314.5,678.3 315.0,678.5 315.5,678.1 316.0,677.6 316.5,678.0 317.0,678.0 317.5,677.7 318.0,677.7 318.5,678.5 319.0,678.8 319.5,678.2 320.0,677.0 320.5,676.0 321.0,676.1 321.5,676.7 322.0,677.3 322.5,679.1 323.0,679.2 323.5,679.9 324.0,681.0 324.5,680.9 325.0,679.9 325.5,679.0 326.0,678.8 326.5,678.2 327.0,678.5 327.5,678.5 328.0,678.4 328.5,678.9 329.0,679.1 329.5,679.5 330.0,679.3 330.5,678.7 331.0,678.5 331.5,678.1 332.0,678.0 332.5,678.7 333.0,677.9 333.5,677.9 334.0,677.7 334.5,677.5 335.0,678.5 335.5,679.3 336.0,679.2 336.5,678.2 337.0,677.8 337.5,678.1 338.0,678.9 338.5,680.0 339.0,680.3 339.5,679.8 340.0,679.4 340.5,678.1 341.0,677.4 341.5,676.7 342.0,677.4 342.5,679.0 343.0,679.4 343.5,679.5 344.0,679.8 344.5,679.1 345.0,678.4 345.5,677.7 346.0,677.5 346.5,678.0 347.0,679.2 347.5,680.1 348.0,680.4 348.5,680.1 349.0,679.6 349.5,678.8 350.0,678.5 350.5,678.9 351.0,678.2 351.5,679.0 352.0,678.7 352.5,679.6 353.0,679.6 353.5,679.0 354.0,679.3 354.5,679.0 355.0,678.1 355.5,676.8 356.0,676.2 356.5,675.8 357.0,676.3 357.5,676.0 358.0,674.6 358.5,673.3 359.0,672.9 359.5,673.2 360.0,674.1 360.5,674.0 361.0,674.0 361.5,673.3 362.0,673.7 362.5,674.2 363.0,674.8 363.5,675.4 364.0,675.5 364.5,675.9 365.0,675.9 365.5,675.9 366.0,675.9 366.5,675.6 367.0,676.1 367.5,676.4 368.0,676.7 368.5,676.5 369.0,676.6 369.5,676.8 370.0,676.5 370.5,675.9 371.0,674.9 371.5,673.8 372.0,673.5 372.5,674.0 373.0,672.5 373.5,671.5 374.0,670.8 374.5,670.1 375.0,670.6 375.5,670.2 376.0,671.3 376.5,676.4 377.0,672.2 377.5,671.4 378.0,671.9 378.5,671.3 379.0,672.4 379.5,671.6 380.0,670.1 380.5,670.5 381.0,671.5 381.5,672.9 382.0,673.0 382.5,672.6 383.0,671.9 383.5,673.4 384.0,673.3 384.5,673.9 385.0,673.8 385.5,672.6 386.0,672.5 386.5,673.1 387.0,673.3 387.5,673.3 388.0,672.1 388.5,671.7 389.0,673.5 389.5,673.1 390.0,673.6 390.5,673.4 391.0,673.2 391.5,673.5 392.0,672.7 392.5,673.0 393.0,673.1 393.5,673.8 394.0,673.9 394.5,674.7 395.0,673.5 395.5,672.6 396.0,671.9 396.5,671.4 397.0,672.4 397.5,672.7 398.0,672.6 398.5,673.2 399.0,673.3 399.5,673.8 400.0,673.6 400.5,673.1 401.0,674.8 401.5,674.5 402.0,675.6 402.5,676.9 403.0,677.6 403.5,676.6 404.0,675.1 404.5,673.3 405.0,672.3 405.5,672.6 406.0,673.1 406.5,672.9 407.0,672.6 407.5,671.9 408.0,671.3 408.5,670.7 409.0,671.5 409.5,672.4 410.0,672.3 410.5,672.2 411.0,671.7 411.5,673.4 412.0,674.6 412.5,675.0 413.0,674.7 413.5,673.4 414.0,674.0 414.5,674.0 415.0,673.0 415.5,673.0 416.0,672.6 416.5,673.8 417.0,675.3 417.5,675.5 418.0,675.3 418.5,674.8 419.0,674.6 419.5,675.7 420.0,676.0 420.5,675.1 421.0,674.8 421.5,674.0 422.0,674.4 422.5,675.0 423.0,674.7 423.5,675.0 424.0,674.4 424.5,673.9 425.0,673.6 425.5,673.3 426.0,672.9 426.5,673.4 427.0,673.1 427.5,672.5 428.0,673.2 428.5,673.8 429.0,674.8 429.5,674.9 430.0,673.1 430.5,673.6 431.0,674.2 431.5,674.8 432.0,675.2 432.5,674.0 433.0,674.2 433.5,674.0 434.0,674.1 434.5,673.9 435.0,673.7 435.5,674.0 436.0,674.2 436.5,674.1 437.0,674.6 437.5,675.1 438.0,675.2 438.5,674.8 439.0,674.9 439.5,675.6 440.0,676.0 440.5,676.6 441.0,677.9 441.5,676.1 442.0,674.8 442.5,675.3 443.0,675.9 443.5,676.1 444.0,675.7 444.5,674.8 445.0,673.4 445.5,673.4 446.0,672.7 446.5,673.0 447.0,672.6 447.5,674.1 448.0,675.9 448.5,674.4 449.0,673.5 449.5,671.7 450.0,670.7 450.5,671.1 451.0,672.4 451.5,673.4 452.0,674.4 452.5,674.3 453.0,675.4 453.5,674.7 454.0,674.5 454.5,675.5 455.0,674.9 455.5,674.8 456.0,674.2 456.5,673.5 457.0,672.4 457.5,672.9 458.0,673.7 458.5,673.8 459.0,673.3 459.5,673.3 460.0,672.8 460.5,671.8 461.0,671.6 461.5,671.6 462.0,672.0 462.5,671.4 463.0,671.8 463.5,672.8 464.0,672.9 464.5,673.9 465.0,673.5 465.5,673.6 466.0,673.1 466.5,672.3 467.0,671.2 467.5,669.7 468.0,670.5 468.5,670.8 469.0,671.3 469.5,670.3 470.0,669.2 470.5,668.6 471.0,669.3 471.5,671.3 472.0,672.2 472.5,672.4 473.0,673.3 473.5,674.1 474.0,674.8 474.5,675.0 475.0,675.7 475.5,675.4 476.0,675.1 476.5,674.6 477.0,673.6 477.5,673.4 478.0,672.3 478.5,671.8 479.0,670.6 479.5,669.8 480.0,671.0 480.5,671.9 481.0,671.4 481.5,671.6 482.0,672.2 482.5,673.2 483.0,672.6 483.5,671.5 484.0,671.9 484.5,672.3 485.0,673.2 485.5,673.8 486.0,673.4 486.5,671.9 487.0,672.0 487.5,672.1 488.0,672.6 488.5,672.3 489.0,672.5 489.5,672.6 490.0,672.0 490.5,672.2 491.0,671.1 491.5,670.2 492.0,670.2 492.5,672.2 493.0,672.9 493.5,672.3 494.0,671.5 494.5,671.7 495.0,671.5 495.5,671.0 496.0,670.9 496.5,670.1 497.0,669.8 497.5,669.5 498.0,669.0 498.5,668.7 499.0,669.5 499.5,669.6 500.0,669.4 500.5,668.9 501.0,668.8 501.5,668.9 502.0,670.3 502.5,670.7 503.0,670.8 503.5,670.6 504.0,670.4 504.5,670.8 505.0,670.9 505.5,671.9 506.0,672.9 506.5,672.2 507.0,671.2 507.5,670.4 508.0,669.9 508.5,669.6 509.0,670.3 509.5,669.6 510.0,668.7 510.5,669.3 511.0,669.6 511.5,667.4 512.0,669.1 512.5,669.8 513.0,670.1 513.5,669.5 514.0,668.9 514.5,669.4 515.0,669.5 515.5,670.1 516.0,672.1 516.5,671.1 517.0,671.5 517.5,671.5 518.0,671.0 518.5,671.2 519.0,670.5 519.5,669.9 520.0,669.2 520.5,668.1 521.0,667.9 521.5,667.8 522.0,669.4 522.5,670.2 523.0,669.5 523.5,669.5 524.0,669.8 524.5,670.1 525.0,669.8 525.5,668.9 526.0,669.9 526.5,670.6 527.0,670.8 527.5,670.2 528.0,669.9 528.5,670.4 529.0,670.5 529.5,670.7 530.0,670.1 530.5,669.8 531.0,670.0 531.5,670.3 532.0,670.0 532.5,669.7 533.0,668.8 533.5,668.3 534.0,668.6 534.5,668.8 535.0,669.4 535.5,669.3 536.0,669.4 536.5,668.3 537.0,669.4 537.5,670.0 538.0,670.2 538.5,670.3 539.0,669.8 539.5,670.4 540.0,670.0 540.5,669.5 541.0,668.4 541.5,667.5 542.0,667.7 542.5,667.9 543.0,668.7 543.5,668.9 544.0,669.6 544.5,669.6 545.0,669.7 545.5,669.3 546.0,668.6 546.5,668.9 547.0,669.1 547.5,669.7 548.0,670.1 548.5,669.6 549.0,669.6 549.5,668.8 550.0,668.2 550.5,668.5 551.0,668.8 551.5,668.8 552.0,668.5 552.5,668.3 553.0,668.8 553.5,669.1 554.0,668.9 554.5,669.1 555.0,668.9 555.5,669.3 556.0,669.1 556.5,669.3 557.0,669.5 557.5,670.2 558.0,672.2 558.5,669.9 559.0,668.5 559.5,668.5 560.0,668.1 560.5,668.2 561.0,668.3 561.5,669.0 562.0,669.9 562.5,670.0 563.0,669.2 563.5,668.5 564.0,668.4 564.5,668.6 565.0,668.8 565.5,668.9 566.0,668.2 566.5,667.8 567.0,667.7 567.5,667.5 568.0,668.0 568.5,667.4 569.0,668.6 569.5,668.5 570.0,668.1 570.5,668.0 571.0,668.7 571.5,669.5 572.0,669.9 572.5,669.9 573.0,669.5 573.5,669.4 574.0,669.8 574.5,670.0 575.0,669.0 575.5,668.5 576.0,668.3 576.5,668.0 577.0,668.0 577.5,667.9 578.0,668.4 578.5,669.6 579.0,670.2 579.5,669.9 580.0,669.9 580.5,669.2 581.0,669.4 581.5,669.5 582.0,668.4 582.5,667.3 583.0,666.4 583.5,667.0 584.0,667.8 584.5,668.0 585.0,667.8 585.5,668.1 586.0,667.8 586.5,668.4 587.0,669.2 587.5,670.0 588.0,670.0 588.5,669.3 589.0,669.7 589.5,669.6 590.0,670.1 590.5,670.4 591.0,670.2 591.5,669.4 592.0,668.8 592.5,667.6 593.0,667.4 593.5,667.7 594.0,668.1 594.5,667.9 595.0,667.9 595.5,667.9 596.0,667.8 596.5,668.3 597.0,668.5 597.5,668.0 598.0,668.2 598.5,668.3 599.0,668.3 599.5,668.0 600.0,666.9 600.5,667.9 601.0,668.7 601.5,669.2 602.0,669.0 602.5,667.7 603.0,667.1 603.5,667.1 604.0,668.2 604.5,668.6 605.0,668.4 605.5,667.9 606.0,667.4 606.5,666.4 607.0,665.5 607.5,666.1 608.0,666.3 608.5,666.9 609.0,667.5 609.5,668.5 610.0,668.3 610.5,667.6 611.0,666.8 611.5,666.6 612.0,666.8 612.5,667.6 613.0,668.2 613.5,668.3 614.0,668.7 614.5,668.9 615.0,668.7 615.5,669.0 616.0,669.5 616.5,669.6 617.0,669.1 617.5,667.4 618.0,667.6 618.5,668.0 619.0,668.7 619.5,669.5 620.0,669.4 620.5,669.4 621.0,669.0 621.5,669.0 622.0,668.6 622.5,667.9 623.0,667.6 623.5,668.2 624.0,668.8 624.5,669.4 625.0,669.4 625.5,669.3 626.0,669.5 626.5,670.0 627.0,670.3 627.5,670.8 628.0,670.6 628.5,669.6 629.0,669.0 629.5,669.2 630.0,669.0 630.5,668.8 631.0,668.6 631.5,668.2 632.0,667.5 632.5,666.7 633.0,667.0 633.5,666.8 634.0,667.2 634.5,667.3 635.0,666.9 635.5,667.0 636.0,667.7 636.5,668.2 637.0,668.7 637.5,668.8 638.0,669.4 638.5,670.3 639.0,670.2 639.5,669.6 640.0,668.7 640.5,668.5 641.0,669.7 641.5,670.8 642.0,671.6 642.5,670.6 643.0,670.5 643.5,669.6 644.0,668.3 644.5,668.2 645.0,669.5 645.5,669.6 646.0,668.9 646.5,668.3 647.0,667.6 647.5,667.0 648.0,667.0 648.5,667.4 649.0,667.6 649.5,668.0 650.0,668.7 650.5,669.3 651.0,669.7 651.5,669.2 652.0,669.4 652.5,669.1 653.0,668.5 653.5,668.5 654.0,668.1 654.5,667.9 655.0,667.9 655.5,667.9 656.0,667.6 656.5,668.2 657.0,668.3 657.5,668.2 658.0,668.3 658.5,667.8 659.0,667.4 659.5,667.3 660.0,667.2 660.5,668.1 661.0,668.6 661.5,668.3 662.0,668.7 662.5,668.0 663.0,668.4 663.5,669.4 664.0,670.1 664.5,670.4 665.0,669.7 665.5,669.4 666.0,669.1 666.5,668.7 667.0,668.3 667.5,667.6 668.0,667.5 668.5,667.6 669.0,667.2 669.5,666.5 670.0,666.4 670.5,666.3 671.0,666.5 671.5,666.5 672.0,666.5 672.5,666.0 673.0,666.3 673.5,666.2 674.0,666.3 674.5,667.0 675.0,668.4 675.5,667.7 676.0,667.6 676.5,667.3 677.0,666.5 677.5,666.1 678.0,666.2 678.5,666.2 679.0,666.2 679.5,667.2 680.0,667.3 680.5,666.8 681.0,666.6 681.5,666.8 682.0,667.2 682.5,667.8 683.0,668.0 683.5,668.3 684.0,669.1 684.5,668.5 685.0,669.0 685.5,668.7 686.0,669.0 686.5,668.5 687.0,668.6 687.5,668.0 688.0,667.6 688.5,667.2 689.0,666.3 689.5,666.6 690.0,666.3 690.5,666.1 691.0,666.3 691.5,666.9 692.0,666.7 692.5,667.1 693.0,667.1 693.5,667.9 694.0,668.0 694.5,667.8 695.0,667.8 695.5,667.9 696.0,668.3 696.5,668.8 697.0,668.4 697.5,668.3 698.0,668.5 698.5,668.9 699.0,668.3 699.5,667.4 700.0,666.5 700.5,666.2 701.0,666.4 701.5,666.8 702.0,668.2 702.5,668.1 703.0,667.9 703.5,668.0 704.0,668.4 704.5,668.2 705.0,668.4 705.5,667.8 706.0,667.2 706.5,666.9 707.0,667.8 707.5,668.5 708.0,668.5 708.5,668.5 709.0,668.0 709.5,667.4 710.0,666.8 710.5,666.5 711.0,667.0 711.5,667.3 712.0,667.1 712.5,667.1 713.0,667.4 713.5,667.4 714.0,668.3 714.5,668.0 715.0,667.8 715.5,667.3 716.0,666.6 716.5,667.1 717.0,667.4 717.5,667.7 718.0,667.3 718.5,667.4 719.0,666.8 719.5,667.3 720.0,666.6 720.5,667.0 721.0,668.3 721.5,668.3 722.0,668.2 722.5,667.5 723.0,667.3 723.5,667.6 724.0,667.9 724.5,668.1 725.0,668.1 725.5,668.8 726.0,669.2 726.5,668.0 727.0,666.3 727.5,665.7 728.0,665.7 728.5,666.2 729.0,666.7 729.5,666.9 730.0,667.0 730.5,666.8 731.0,667.3 731.5,666.9 732.0,666.9 732.5,667.3 733.0,666.9 733.5,667.6 734.0,667.3 734.5,666.8 735.0,666.6 735.5,666.4 736.0,667.2 736.5,667.6 737.0,667.3 737.5,667.9 738.0,668.6 738.5,667.9 739.0,668.1 739.5,667.7 740.0,668.2 740.5,667.0 741.0,666.8 741.5,666.6 742.0,666.6 742.5,667.1 743.0,666.4 743.5,666.7 744.0,666.9 744.5,667.1 745.0,667.8 745.5,667.6 746.0,667.2 746.5,667.6 747.0,667.3 747.5,668.2 748.0,668.2 748.5,668.5 749.0,668.6 749.5,667.6 750.0,667.3 750.5,667.3 751.0,667.4 751.5,667.6 752.0,667.8 752.5,668.0 753.0,668.6 753.5,668.4 754.0,668.3 754.5,667.8 755.0,667.5 755.5,668.3 756.0,668.4 756.5,668.5 757.0,667.1 757.5,666.8 758.0,666.9 758.5,667.1 759.0,667.8 759.5,668.1 760.0,668.0 760.5,667.8 761.0,667.8 761.5,668.5 762.0,668.9 762.5,668.9 763.0,669.8 763.5,669.6 764.0,669.3 764.5,669.1 765.0,668.9 765.5,668.5 766.0,668.3 766.5,667.8 767.0,667.7 767.5,667.4 768.0,667.5 768.5,667.8 769.0,668.2 769.5,667.9 770.0,667.3 770.5,667.1 771.0,667.2 771.5,667.0 772.0,667.5 772.5,667.6 773.0,667.6 773.5,668.4 774.0,668.4 774.5,668.5 775.0,667.9 775.5,668.7 776.0,668.1 776.5,667.9 777.0,667.8 777.5,668.2 778.0,668.1 778.5,667.9 779.0,669.0 779.5,669.2 780.0,669.5 780.5,668.8 781.0,668.4 781.5,667.7 782.0,667.7 782.5,667.4 783.0,667.3 783.5,666.9 784.0,667.2 784.5,667.6 785.0,666.9 785.5,667.5 786.0,667.3 786.5,667.6 787.0,667.5 787.5,667.8 788.0,668.1 788.5,668.4 789.0,668.8 789.5,668.4 790.0,668.1 790.5,666.9 791.0,666.0 791.5,665.1 792.0,665.1 792.5,666.2 793.0,666.5 793.5,666.9 794.0,666.3 794.5,665.6 795.0,667.0 795.5,667.6 796.0,668.5 796.5,669.5 797.0,669.0 797.5,667.9 798.0,667.7 798.5,667.5 799.0,667.5 799.5,667.3 800.0,667.2 800.5,667.1 801.0,667.3 801.5,666.8 802.0,667.0 802.5,666.9 803.0,666.9 803.5,666.9 804.0,666.9 804.5,666.9 805.0,667.6 805.5,668.3 806.0,668.1 806.5,667.6 807.0,667.2 807.5,666.8 808.0,666.6 808.5,667.3 809.0,667.2 809.5,667.7 810.0,667.1 810.5,667.1 811.0,666.5 811.5,666.2 812.0,666.8 812.5,667.1 813.0,667.1 813.5,667.2 814.0,668.3 814.5,669.2 815.0,668.2 815.5,668.0 816.0,668.0 816.5,667.5 817.0,667.5 817.5,666.9 818.0,666.0 818.5,666.1 819.0,666.4 819.5,667.4 820.0,667.6 820.5,667.2 821.0,667.7 821.5,668.2 822.0,668.5 822.5,667.3 823.0,667.0 823.5,667.0 824.0,666.8 824.5,666.4 825.0,666.2 825.5,666.9 826.0,667.7 826.5,668.0 827.0,667.9 827.5,667.4 828.0,665.9 828.5,666.9 829.0,667.3 829.5,667.8 830.0,667.6 830.5,667.1 831.0,667.0 831.5,667.0 832.0,667.7 832.5,667.8 833.0,667.2 833.5,666.9 834.0,666.4 834.5,665.8 835.0,665.9 835.5,666.2 836.0,666.5 836.5,666.7 837.0,666.9 837.5,666.4 838.0,666.4 838.5,666.2 839.0,666.0 839.5,665.7 840.0,665.8 840.5,665.9 841.0,666.3 841.5,666.3 842.0,666.7 842.5,667.2 843.0,667.5 843.5,667.0 844.0,666.7 844.5,666.4 845.0,667.2 845.5,667.8 846.0,668.4 846.5,668.0 847.0,666.6 847.5,666.4 848.0,666.7 848.5,667.4 849.0,667.9 849.5,667.8 850.0,668.1 850.5,667.9 851.0,668.0 851.5,668.8 852.0,669.2 852.5,669.6 853.0,668.7 853.5,668.6 854.0,668.2 854.5,668.4 855.0,668.3 855.5,667.5 856.0,666.7 856.5,666.7 857.0,666.9 857.5,667.7 858.0,668.5 858.5,669.0 859.0,669.2 859.5,668.8 860.0,669.0 860.5,668.8 861.0,669.1 861.5,668.2 862.0,666.8 862.5,666.5 863.0,666.9 863.5,667.9 864.0,668.9 864.5,668.4 865.0,667.5 865.5,664.3 866.0,666.7 866.5,668.1 867.0,668.5 867.5,668.1 868.0,667.4 868.5,666.2 869.0,665.3 869.5,665.6 870.0,666.8 870.5,667.9 871.0,668.1 871.5,668.1 872.0,668.3 872.5,668.4 873.0,668.4 873.5,668.0 874.0,668.0 874.5,668.0 875.0,667.8 875.5,667.9 876.0,667.9 876.5,668.3 877.0,668.7 877.5,669.0 878.0,669.3 878.5,670.0 879.0,670.3 879.5,670.0 880.0,669.6 880.5,669.4 881.0,668.7 881.5,668.3 882.0,667.3 882.5,666.6 883.0,667.1 883.5,667.8 884.0,668.4 884.5,667.6 885.0,667.2 885.5,667.5 886.0,667.8 886.5,668.0 887.0,668.0 887.5,668.3 888.0,668.2 888.5,667.1 889.0,666.5 889.5,665.8 890.0,665.7 890.5,665.9 891.0,666.1 891.5,666.2 892.0,666.4 892.5,666.4 893.0,667.8 893.5,666.9 894.0,667.0 894.5,667.6 895.0,667.4 895.5,667.8 896.0,667.3 896.5,667.4 897.0,667.3 897.5,668.1 898.0,668.2 898.5,668.2 899.0,667.8 899.5,666.6 900.0,666.2 900.5,666.3 901.0,666.5 901.5,666.5 902.0,666.0 902.5,666.2 903.0,666.7 903.5,666.9 904.0,667.4 904.5,667.0 905.0,666.7 905.5,666.2 906.0,666.4 906.5,666.9 907.0,666.7 907.5,667.1 908.0,667.3 908.5,667.0 909.0,667.5 909.5,667.2 910.0,667.3 910.5,668.0 911.0,668.3 911.5,668.4 912.0,669.0 912.5,668.7 913.0,669.2 913.5,668.5 914.0,667.9 914.5,668.1 915.0,668.2 915.5,668.3 916.0,668.0 916.5,667.8 917.0,668.0 917.5,667.9 918.0,667.1 918.5,667.1 919.0,666.0 919.5,666.0 920.0,666.3 920.5,666.8 921.0,667.2 921.5,666.6 922.0,666.5 922.5,666.2 923.0,666.6 923.5,666.8 924.0,666.8 924.5,666.5 925.0,666.5 925.5,666.7 926.0,666.0 926.5,665.9 927.0,665.8 927.5,665.4 928.0,665.7 928.5,666.0 929.0,666.4 929.5,667.3" fill="none" stroke="#fff" stroke-width="1.5" shape-rendering="crispEdges"/>
<path d="M362.5 505V838" stroke="#e8e800" stroke-width="1"/>
<path d="M616.5 505V838" stroke="#00e020" stroke-width="1"/>
<path d="M359 673l7 7M366 673l-7 7" stroke="#e8e800" stroke-width="1"/>
<path d="M613 667l7 7M620 667l-7 7" stroke="#00e020" stroke-width="1"/>
</g></svg>
<div class="b" style="left:1200px;top:772px;width:59px;height:37px;background:linear-gradient(to right,#c4c4c4 0,#d2d2d2 5px,#cacaca 12px,#b4b4b4 14px,#b4b4b4 45px,#c4c4c4 47px,#a8a8a8 53px,#7a7a7a 58px,#404040 59px);"></div>
<div class="b" style="left:1200px;top:772px;width:59px;height:37px;background:linear-gradient(#d8d8d8,transparent 3px,transparent 34px,#808080 36px,#707070 37px);"></div>
<svg style="left:1200px;top:772px" width="59" height="37" viewBox="0 0 59 37">
<path d="M29.5 3 L45 18.5 L29.5 34 L14 18.5 Z" fill="none" stroke="#000" stroke-width="1"/>
<path d="M21.2 11.2 L37.8 27.8 M22.6 9.8 L39.2 26.4 M37.8 9.8 L21.2 26.4 M36.4 11.2 L19.8 27.8" stroke="#000" stroke-width="0.9"/>
</svg>
<svg style="left:960px;top:872px" width="300" height="90" viewBox="0 0 300 90">
<defs><mask id="wmk" maskUnits="userSpaceOnUse" x="0" y="0" width="300" height="90"><rect width="300" height="90" fill="#fff"/><g fill="#000"><path d="M6 13.7 Q15 7 22 7.5 Q30 8 33 11 L55.8 37.6 L40 45 Q37 45.5 35 43 Z"/><path d="M22.8 31.7 Q19 48 19.2 65 L34.6 49.3 V43.4 Z"/><path d="M46 8 H65.5 Q55 18 55 33 L44 19 Z"/></g></mask></defs>
<g fill="rgba(255,255,255,0.55)"><path d="M6 13.7 Q15 7 22 7.5 Q30 8 33 11 L55.8 37.6 L40 45 Q37 45.5 35 43 Z"/><path d="M22.8 31.7 Q19 48 19.2 65 L34.6 49.3 V43.4 Z"/><path d="M46 8 H65.5 Q55 18 55 33 L44 19 Z"/></g>
<g mask="url(#wmk)"><g fill="rgba(0,0,0,0.25)" transform="translate(0.8,1.2)"><path d="M6 13.7 Q15 7 22 7.5 Q30 8 33 11 L55.8 37.6 L40 45 Q37 45.5 35 43 Z"/><path d="M22.8 31.7 Q19 48 19.2 65 L34.6 49.3 V43.4 Z"/><path d="M46 8 H65.5 Q55 18 55 33 L44 19 Z"/></g></g>
</svg>
<div class="t" style="left:1029px;top:876.99px;font-size:26px;line-height:26px;color:#000;font-weight:bold;letter-spacing:-0.6px;color:#f2f2f2;text-shadow:1px 1px 1px #a8a8a8;">NATIONAL</div>
<div class="t" style="left:1020px;top:901.99px;font-size:26px;line-height:26px;color:#000;font-weight:bold;letter-spacing:-0.7px;color:#f2f2f2;text-shadow:1px 1px 1px #a8a8a8;">INSTRUMENTS</div>
<div class="t" style="left:995px;top:933.84px;font-size:25px;line-height:25px;color:#000;font-weight:bold;color:#f2f2f2;text-shadow:1px 1px 1px #a8a8a8;transform:scaleX(0.84);transform-origin:0 0;">LabVIEW</div>
<div class="t" style="left:1085px;top:935.23px;font-size:8px;line-height:8px;color:#000;font-weight:bold;color:#f2f2f2;text-shadow:1px 1px 1px #a8a8a8;">TM</div>
<div class="t" style="left:1100px;top:933.84px;font-size:25px;line-height:25px;color:#000;font-weight:bold;color:#f2f2f2;text-shadow:1px 1px 1px #a8a8a8;transform:scaleX(0.84);transform-origin:0 0;">Student Edition</div>
<div class="b" style="left:0px;top:980px;width:1280px;height:44px;background:#d4d0c8;border-top:1px solid #fff;"></div>
<div class="b" style="left:2px;top:984px;width:52px;height:38px;background:#d4d0c8;border-top:1px solid #fff;border-left:1px solid #fff;border-right:1px solid #404040;border-bottom:1px solid #404040;box-shadow:inset -1px -1px 0 #808080;"></div>
<svg style="left:4px;top:992px" width="18" height="22" viewBox="0 0 18 22">
<path d="M2 4 Q5 2 8 3.5 L7 10 Q4 8.5 1 10 Z" fill="#f25022"/>
<path d="M9 4 Q12 5.5 16 3.5 L15 10 Q12 11.5 8 10 Z" fill="#7fba00"/>
<path d="M1 11 Q4 9.5 7 11 L6 17.5 Q3 16 0 17.5 Z" fill="#00a4ef"/>
<path d="M8 11 Q11 12.5 15 11 L14 17.5 Q11 19 7 17.5 Z" fill="#ffb900"/>
</svg>
<div class="t" style="left:21px;top:996.00px;font-size:13px;line-height:13px;color:#000;font-weight:bold;">Start</div>
<svg style="left:60px;top:984px" width="310" height="40" viewBox="0 0 310 40">
<g transform="translate(12,4)">
<circle cx="16" cy="16" r="9.5" fill="none" stroke="#1a5cb8" stroke-width="5.5" stroke-dasharray="1.7 7.5 50.5"/>
<circle cx="16" cy="16" r="9.5" fill="none" stroke="#4aa8ec" stroke-width="2.5" stroke-dasharray="1.7 7.5 50.5"/>
<rect x="8" y="14.5" width="17" height="3.2" fill="#1a5cb8"/>
<path d="M3 26 Q-2 22 8 12 Q20 2 28 3 Q33 4 27 11" fill="none" stroke="#f0b020" stroke-width="2.2"/>
</g>
<g transform="translate(61,6)">
<path d="M1 4 Q1 2 3 2 H15 L16 4 H29 Q31 4 31 6 V26 Q31 27 30 27 H2 Q1 27 1 26 Z" fill="#e8c878" stroke="#c8a050" stroke-width="1"/>
<rect x="4" y="2" width="9" height="3" fill="#fff"/><rect x="4.5" y="2.3" width="3" height="2.2" fill="#20c020"/>
<rect x="11" y="4" width="9" height="3" fill="#fff"/><rect x="11.5" y="4.3" width="3" height="2.2" fill="#d02020"/>
<rect x="18" y="6" width="9" height="3" fill="#fff"/><rect x="18.5" y="6.3" width="3" height="2.2" fill="#2090e0"/>
<path d="M1.5 9 H30.5 V26.5 H1.5 Z" fill="#f6e098" stroke="#d0b060" stroke-width="0.8"/>
<path d="M4 29 V17.5 Q4 16 5.5 16 H26.5 Q28 16 28 17.5 V29 H22 V22 H10 V29 Z" fill="#90c8f0" stroke="#4a90d0" stroke-width="1"/>
<path d="M6 18.5 H26" stroke="#d8f0ff" stroke-width="1.5"/>
</g>
<g transform="translate(112,8)">
<rect x="5" y="1.5" width="22" height="23" fill="#a8d0f0" stroke="#70a8d8" stroke-width="0.8"/>
<rect x="3" y="0.8" width="22" height="23.5" fill="#b8dcf4" stroke="#70a8d8" stroke-width="0.8"/>
<rect x="1.5" y="0.2" width="21" height="24" fill="#c4e2f8" stroke="#6aa4d8" stroke-width="0.8"/>
<circle cx="11.5" cy="12" r="8.6" fill="#f07820" stroke="#d06010" stroke-width="0.8"/>
<path d="M8.6 6.5 V17.5 L17 12 Z" fill="#fff"/>
</g>
<g transform="translate(161,3)">
<circle cx="16" cy="16" r="13.5" fill="#2a62b8"/>
<circle cx="18" cy="13" r="8" fill="#3a8ad8"/>
<path d="M3 13 Q4 5 10 2.5 Q8 6 9.5 8 Q12 5 16 6 Q11 8 11 13 Q11 20 18 22 Q25 23 29 16 Q29 26 20 29.5 Q10 31 5 24 Q2 19 3 13Z" fill="#e8701a"/>
<path d="M20 2.6 Q28 5 29.8 14 Q27 8 22 6Z" fill="#f4b030"/>
<path d="M5 24 Q12 31 21 29" stroke="#c84a10" stroke-width="1.5" fill="none"/>
</g>
</svg>
<div class="b" style="left:263px;top:984px;width:48px;height:38px;background:#d4d0c8;border-top:1px solid #fff;border-left:1px solid #fff;border-right:1px solid #404040;border-bottom:1px solid #404040;box-shadow:inset -1px -1px 0 #808080;"></div>
<svg style="left:270px;top:987px" width="34" height="32" viewBox="0 0 34 32">
<defs><linearGradient id="ipg" x1="0" y1="1" x2="1" y2="0"><stop offset="0" stop-color="#7068d0"/><stop offset="1" stop-color="#f0eefc"/></linearGradient></defs>
<path d="M1.5 26.5 V7 Q1.5 1 7.5 1 H28 V26.5 Z" fill="url(#ipg)" stroke="#4a44b0" stroke-width="1.6"/>
<path d="M7.5 8.5 L19.5 5.2 L18.8 2.2 L32 17.5 L25.5 16.5 L24 22 L11.5 18 Z" fill="#fafaff" stroke="#b0b0c8" stroke-width="0.6"/>
<path d="M5 21.5 L9.8 12.2 L26.2 18.5 L21.6 29.2 Z" fill="#fff" stroke="#9090a8" stroke-width="0.6"/>
<path d="M10.5 15.2 L14.5 16.8 L13.2 20 L9.2 18.4 Z" fill="#6a60d0"/>
<path d="M16 18 L23 20.6 M15 20.6 L22 23.2 M8.5 21.5 L20.5 26" stroke="#6a60d0" stroke-width="1.3"/>
</svg>
<div class="b" style="left:313px;top:984px;width:48px;height:38px;background:#fff;border-top:1px solid #404040;border-left:1px solid #404040;border-right:1px solid #d4d0c8;border-bottom:1px solid #d4d0c8;box-shadow:inset 1px 1px 0 #808080;"></div>
<svg style="left:320px;top:986px" width="34" height="30" viewBox="0 0 34 30">
<defs><linearGradient id="lvy" x1="0" y1="0" x2="1" y2="1"><stop offset="0" stop-color="#fff080"/><stop offset="1" stop-color="#e8a800"/></linearGradient></defs>
<rect x="3" y="1.3" width="28" height="27.5" fill="#a8b0b0" stroke="#707070" stroke-width="0.6"/>
<rect x="5.0" y="2.3" width="2" height="2" fill="#e8e8e8" stroke="#505050" stroke-width="0.5"/><rect x="8.6" y="2.3" width="2" height="2" fill="#e8e8e8" stroke="#505050" stroke-width="0.5"/><rect x="12.2" y="2.3" width="2" height="2" fill="#e8e8e8" stroke="#505050" stroke-width="0.5"/><rect x="15.8" y="2.3" width="2" height="2" fill="#e8e8e8" stroke="#505050" stroke-width="0.5"/><rect x="19.4" y="2.3" width="2" height="2" fill="#e8e8e8" stroke="#505050" stroke-width="0.5"/><rect x="23.0" y="2.3" width="2" height="2" fill="#e8e8e8" stroke="#505050" stroke-width="0.5"/><rect x="26.6" y="2.3" width="2" height="2" fill="#e8e8e8" stroke="#505050" stroke-width="0.5"/><rect x="5.0" y="25.5" width="2" height="2" fill="#e8e8e8" stroke="#505050" stroke-width="0.5"/><rect x="8.6" y="25.5" width="2" height="2" fill="#e8e8e8" stroke="#505050" stroke-width="0.5"/><rect x="12.2" y="25.5" width="2" height="2" fill="#e8e8e8" stroke="#505050" stroke-width="0.5"/><rect x="15.8" y="25.5" width="2" height="2" fill="#e8e8e8" stroke="#505050" stroke-width="0.5"/><rect x="19.4" y="25.5" width="2" height="2" fill="#e8e8e8" stroke="#505050" stroke-width="0.5"/><rect x="23.0" y="25.5" width="2" height="2" fill="#e8e8e8" stroke="#505050" stroke-width="0.5"/><rect x="26.6" y="25.5" width="2" height="2" fill="#e8e8e8" stroke="#505050" stroke-width="0.5"/>
<rect x="4.8" y="5" width="24.6" height="19" fill="#0a0a0a"/>
<path d="M6 14.5 C6 3, 11 3, 11 14.5 S 17 26, 17 14.5 S 23 3, 23 14.5 S 29 26, 29 14.5" stroke="#30a060" stroke-width="1.3" fill="none"/>
<path d="M10.5 7 L26 14.5 L10.5 22.3 Z" fill="url(#lvy)" stroke="#302800" stroke-width="0.8"/>
<path d="M13 14.5 h5 M15.5 12 v5" stroke="#000" stroke-width="1.6"/>
<path d="M2 10.8 h8.5 M26 14.5 h6" stroke="#e03030" stroke-width="1.3"/>
<path d="M2 18.1 h8.5" stroke="#3070d0" stroke-width="1.3"/>
</svg>
<div class="t" style="left:1033px;top:993.84px;font-size:12px;line-height:12px;color:#000;">HU</div>
<div class="b" style="left:1053px;top:988px;width:2px;height:28px;border-left:1px solid #808080;border-right:1px solid #fff;"></div>
<div class="b" style="left:1056px;top:984px;width:224px;height:40px;border-top:1px solid #808080;border-left:1px solid #808080;"></div>
<svg style="left:1060px;top:988px" width="220" height="34" viewBox="0 0 220 34">
<path d="M2 10l3-3l3 3M2 14l3-3l3 3" stroke="#000" stroke-width="1.3" fill="none"/>
<g transform="translate(20,5)"><path d="M2 2v20" stroke="#666" stroke-width="1.5"/><path d="M3 3h9l2 2h4v8H8l-2-2H3z" fill="#eee" stroke="#888"/><circle cx="13" cy="17" r="5" fill="#e02020"/><path d="M11 15l4 4M15 15l-4 4" stroke="#fff" stroke-width="1.3"/></g>
<g transform="translate(45,6)"><rect x="6" y="6" width="12" height="10" fill="#bbb" stroke="#555"/><rect x="2" y="1" width="4" height="6" fill="#fff" stroke="#555"/><path d="M4 7v14M4 20h14" stroke="#555"/></g>
<g transform="translate(68,8)"><path d="M2 7h4l5-5v20l-5-5H2z" fill="#ddd" stroke="#666"/><path d="M14 7q3 5 0 10M17 5q4 7 0 14" stroke="#777" stroke-width="1.2" fill="none"/></g>
<g transform="translate(166,1)"><path d="M5 24 Q-1 24 1 17 Q3 12 8 13 Q10 6 18 7 Q24 8 25 14 Q31 14 30 20 Q29 24 25 24z" fill="none" stroke="#000" stroke-width="1.8"/><path d="M14 8 Q18 3 23 4 Q29 6 28 12" fill="none" stroke="#000" stroke-width="1.8"/></g>
<g transform="translate(199,9)"><rect x="1" y="1" width="15" height="11" fill="#2878d0" stroke="#666"/><rect x="3" y="9" width="11" height="2" fill="#103070"/></g>
</svg>
<div class="t" style="left:1186.5px;top:989.27px;font-size:11.5px;line-height:11.5px;color:#000;width:80px;text-align:center;margin-left:-40.0px;">18:17</div>
<div class="t" style="left:1186.5px;top:1005.27px;font-size:11.5px;line-height:11.5px;color:#000;width:80px;text-align:center;margin-left:-40.0px;">2016.01.20.</div>
</body></html>
